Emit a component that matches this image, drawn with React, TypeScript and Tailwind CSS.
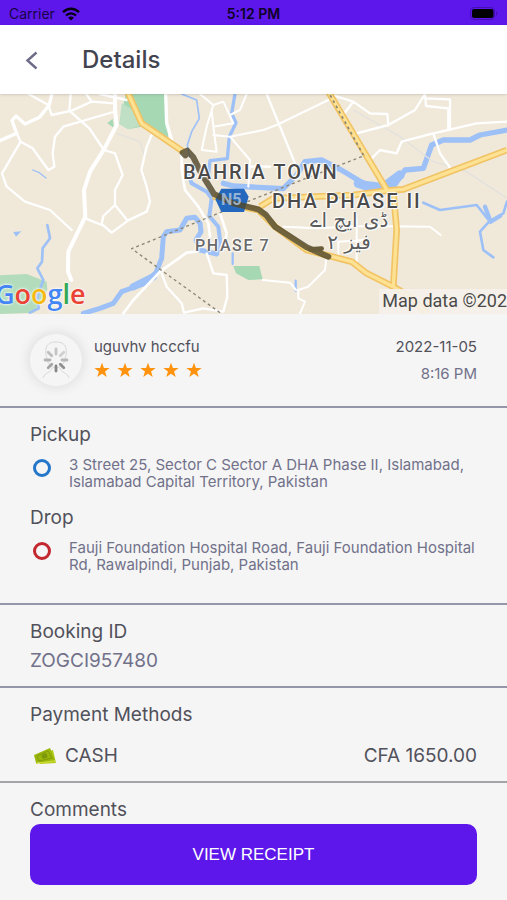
import type { ReactNode } from "react";

function StatusBar() {
  return (
    <div className="grid h-[25px] grid-cols-3 items-center bg-[#5d17eb] px-[9px] pt-[2px] text-sm text-black">
      <div className="flex items-center gap-[7px] text-[#170545]">
        <span>Carrier</span>
        <svg width="18" height="14" viewBox="0 0 18 14" aria-hidden="true">
          <g fill="none" stroke="#05010f" strokeWidth="2.4">
            <path d="M1 5.2C5.600.6 12.400.6 17 5.200" />
            <path d="M4 8.500C6.900 5.600 11.100 5.600 14 8.500" />
          </g>
          <path d="M9 13.600L6.100 10.700C7.700 9.100 10.300 9.100 11.900 10.700Z" fill="#05010f" />
        </svg>
      </div>
      <span className="text-center font-semibold text-[#0d0327]">5:12 PM</span>
      <svg className="justify-self-end" width="28" height="14" viewBox="0 0 28 14" aria-hidden="true">
        <rect x="0.500" y="0.500" width="24" height="12" rx="3.500" fill="none" stroke="#4510b4" />
        <rect x="2" y="2" width="21.500" height="9" rx="2" fill="#000" />
        <path d="M26 4.500C27.800 5 27.800 8 26 8.500Z" fill="#4510b4" />
      </svg>
    </div>
  );
}

function Header() {
  return (
    <header className="relative z-10 flex h-[69px] items-center gap-[43px] bg-white pl-[25px] shadow-sm">
      <button type="button" aria-label="Back" className="flex h-8 w-[14px] items-center">
        <svg width="14" height="20" viewBox="0 0 14 20" aria-hidden="true">
          <path d="M11.500 2.500L2.500 10.500L11.500 18.500" fill="none" stroke="#6c6c88" strokeWidth="2.400" />
        </svg>
      </button>
      <h1 className="text-2xl font-medium text-[#43434f]">Details</h1>
    </header>
  );
}

function MapDrawing() {
  return (
    <svg
      className="absolute inset-0 h-full w-full"
      viewBox="0 12 1521 660"
      preserveAspectRatio="xMidYMid slice"
      aria-hidden="true"
    >
      <rect y="0" width="1521" height="680" fill="#f0e9da" />
      {/* parks */}
      <path d="M380 0H497L505 150L425 110L385 118L358 102L370 45Z" fill="#a6d8b4" />
      <path d="M365 40L400 60L420 108L385 118L358 102Z" fill="#bfe0c4" />
      <path d="M322 100L338 86L342 114Z" fill="#a6d8b4" />
      <path d="M0 556L80 552L140 575L142 600L100 668L0 672Z" fill="#b3dcbd" />
      <path d="M700 528H778L788 568L745 570L708 550Z" fill="#a6d8b4" />
      {/* rivers */}
      <g fill="none" stroke="#9dc0f7" strokeLinejoin="round" strokeLinecap="round">
        <path d="M250 670L300 655L340 640L365 605L430 582L468 548L485 505L490 440L500 425L540 420L560 385L585 382L600 400L603 425L588 450L600 480L650 492" strokeWidth="15" />
        <path d="M400 590L460 560" strokeWidth="22" />
        <path d="M560 235L575 280L620 305L635 325L628 378L655 410L662 465L650 490" strokeWidth="12" />
        <path d="M545 12L590 30L598 85L575 125L562 165L568 200" strokeWidth="5" />
        <path d="M705 12L695 70L708 98L688 140L682 206L630 212L625 260" strokeWidth="10" />
        <path d="M670 280L700 288L850 296L890 255L915 215L965 210L1020 238L1090 280L1180 290L1215 240L1270 235L1295 165L1330 150L1410 150L1440 135L1521 120" strokeWidth="16" />
        <path d="M1075 280L1120 294L1175 296" strokeWidth="28" />
        <path d="M1160 285L1200 255" strokeWidth="28" />
        <path d="M1270 338L1320 360L1430 345L1470 395L1510 370L1521 335M1470 392L1440 425L1450 480L1480 502" strokeWidth="8" />
        <path d="M1455 350L1472 395L1500 378" strokeWidth="13" />
        <path d="M142 405L150 445L128 475L126 515L112 535L130 570L112 620L116 655L90 668" strokeWidth="8" />
        <path d="M98 240L118 248L138 264" strokeWidth="4" />
        <path d="M698 490V522M887 572V602" strokeWidth="7" />
      </g>
      <path d="M40 426L64 424L48 440Z" fill="#9dc0f7" />
      <path d="M350 130L420 155L435 200M1060 60L1200 140L1300 215L1400 245L1521 325" fill="none" stroke="#e2e1dd" strokeWidth="4" />
      {/* local roads */}
      <g fill="none" stroke="#ffffff" strokeLinejoin="round" strokeLinecap="round">
        <path d="M345 12V60L350 105L312 178L270 245L252 300L256 380L205 485L204 545L214 570" strokeWidth="12" />
        <path d="M0 152L50 130L36 92L48 78L75 102L118 82L148 45L158 0" strokeWidth="10" />
        <path d="M50 130L62 155L6 250L20 290L75 335L150 360L215 420" strokeWidth="7" />
        <path d="M62 155L98 175L145 240L163 230L158 190L165 140L190 110L340 66" strokeWidth="7" />
        <path d="M65 0L145 45L155 75L215 62L275 35L345 40M212 12L208 62L268 115L312 180L345 190L368 255L345 300V345L383 392L440 365L450 335L440 290L424 240L440 170L455 135" strokeWidth="7" />
        <path d="M275 35L250 0M300 12L380 30M345 345L310 378L305 402L335 428L380 395M256 385L305 405" strokeWidth="7" />
        <path d="M497 12L500 100L515 150" strokeWidth="10" />
        <path d="M545 185L545 240L555 300L595 350L625 400L630 440M660 370L680 430L675 460" strokeWidth="8" />
        <path d="M370 670L400 630L480 545L560 488L590 485" strokeWidth="8" />
        <path d="M485 550L500 590L545 640L552 668L610 655L670 665L682 620L680 555L640 550L620 490" strokeWidth="7" />
        <path d="M600 12L640 45L670 35L700 100L640 110L635 60M640 45L620 110L605 180L650 185L640 110M640 135L690 140L750 210L745 290M690 140L790 120L830 105L985 30M740 12L720 60L690 75" strokeWidth="6" />
        <path d="M800 12L840 110L885 220M750 230H810M985 12L1060 35L1110 70L1162 72L1165 105L1070 130M1060 35L1025 80M1165 105L1245 60L1275 12L1278 48L1345 55V120M1275 25L1350 28V120M1110 210L1140 180L1190 190L1205 155L1300 130L1430 100L1521 95M1300 130L1320 190L1355 240" strokeWidth="7" />
        <path d="M850 410L950 415L1100 408L1290 410L1322 435M980 500L975 540L925 590L895 600L895 625L915 635L900 670M788 570L870 578L888 600M1015 455V500M1015 455L1090 450M1070 390V520" strokeWidth="6" />
      </g>
      {/* main roads */}
      <g fill="none" strokeLinejoin="round">
        <g stroke="#f1c365" strokeWidth="20">
          <path d="M380 0L425 100L550 185M640 318L700 345L775 360L825 410L920 480L1055 515L1100 550L1180 590L1230 620L1280 670" />
          <path d="M982 0L1065 140L1162 302M780 350L820 325L1060 315L1162 302L1210 298L1350 245L1521 180M1180 590L1190 420L1180 305" />
        </g>
        <g stroke="#fde293" strokeWidth="10">
          <path d="M380 0L425 100L550 185M640 318L700 345L775 360L825 410L920 480L1055 515L1100 550L1180 590L1230 620L1280 670" />
          <path d="M982 0L1065 140L1162 302M780 350L820 325L1060 315L1162 302L1210 298L1350 245L1521 180M1180 590L1190 420L1180 305" />
        </g>
        <path d="M982 0L1090 195" stroke="#8c8574" strokeWidth="5" strokeDasharray="8 10" />
        <path d="M660 668L395 476L660 368L880 280L1095 196" stroke="#8c8574" strokeWidth="4" strokeDasharray="9 9" />
      </g>
      {/* highway shield */}
      <path d="M664 296H732L746 320L732 366H664L646 328Z" fill="#2468bd" />
      {/* trip route */}
      <path d="M556 196L548 188L562 182L580 202L604 250L642 312L700 340L775 358L798 375L825 410L920 472L985 500" fill="none" stroke="#51482c" strokeOpacity="0.820" strokeWidth="18" strokeLinecap="round" strokeLinejoin="round" />
      <path d="M932 478L965 476" stroke="#685b38" strokeWidth="14" strokeLinecap="round" />
    </svg>
  );
}

const halo =
  "[text-shadow:0_0_2px_#fff,0_0_2px_#fff,1px_1px_1px_#fff,-1px_-1px_1px_#fff]";

function TripMap() {
  return (
    <section aria-label="Trip map" className="relative h-[220px] overflow-hidden font-[Roboto,sans-serif]">
      <MapDrawing />
      <span className={`absolute left-[183px] top-[66px] text-xl leading-6 font-medium tracking-widest whitespace-nowrap text-[#4a4a4a] ${halo}`}>
        BAHRIA TOWN
      </span>
      <span className={`absolute left-[272px] top-[95px] text-xl leading-6 font-medium tracking-widest whitespace-nowrap text-[#4a4a4a] ${halo}`}>
        DHA PHASE II
      </span>
      <div
        lang="ur"
        dir="rtl"
        className={`absolute left-[304px] top-[115px] w-[90px] text-center font-['DejaVu_Sans',sans-serif] text-xl leading-[22px] whitespace-nowrap text-[#5c5c5c] ${halo}`}
      >
        <div>ڈی ایچ اے</div>
        <div>فیز ۲</div>
      </div>
      <span className={`absolute left-[195px] top-[142px] text-base leading-5 font-medium tracking-widest whitespace-nowrap text-[#6a6a6a] ${halo}`}>
        PHASE 7
      </span>
      <span className="absolute left-[221px] top-[98px] text-base leading-4 font-bold text-[#b4c8de]/80">N5</span>
      <span className="absolute -left-[5px] top-[184px] font-['Open_Sans',sans-serif] text-[27px] leading-8 font-semibold [text-shadow:0_0_2px_#fff,0_0_3px_#fff]">
        <span className="text-[#4285f4]">G</span>
        <span className="text-[#ea4335]">o</span>
        <span className="text-[#f5b912]">o</span>
        <span className="text-[#4285f4]">g</span>
        <span className="text-[#34a853]">l</span>
        <span className="text-[#ea4335]">e</span>
      </span>
      <span className="absolute right-0 bottom-0 h-[25px] bg-[#f5f2eb]/90 pl-[3px] font-[Roboto,sans-serif] text-lg leading-6 whitespace-nowrap text-[#4a4a4a]">
        Map data ©202
      </span>
    </section>
  );
}

function Avatar() {
  const spokes = [
    "#c4c4c4", "#cfcfcf", "#b8b8b8", "#8f8f8f", "#868686", "#a4a4a4", "#b4b4b4", "#bebebe",
  ];
  return (
    <div className="flex size-[52px] items-center justify-center rounded-full bg-[#f5f5f5] shadow-[0_0_10px_3px_#e2e2e2]">
      <svg width="50" height="50" viewBox="0 0 50 50" aria-hidden="true">
        <g fill="none" stroke="#d8d8d8">
          <path d="M16 24C12 9 19 7 25 7C32 7 38 10 34 24C33 29 29 33 25 33C21 33 17 29 16 24Z" />
          <path d="M21 33C20 38 14 37 12 43M29 33C30 38 36 37 38 43" />
        </g>
        {spokes.map((color, i) => (
          <path
            key={i}
            d="M25 19V14"
            stroke={color}
            strokeWidth="2.800"
            strokeLinecap="round"
            transform={`rotate(${i * 45} 25 25)`}
          />
        ))}
      </svg>
    </div>
  );
}

function Star() {
  return (
    <svg width="16" height="16" viewBox="0 0 24 24" fill="#ff930f" aria-hidden="true">
      <path d="M12 1L14.900 9H23.500L16.600 14.200L19.100 22.500L12 17.500L4.900 22.500L7.400 14.200L.5 9H9.100Z" />
    </svg>
  );
}

function Stop({ title, ring, children }: { title: string; ring: string; children: ReactNode }) {
  return (
    <div>
      <h2 className="text-[19px] leading-6">{title}</h2>
      <div className="mt-[9px] flex gap-[18px] pl-[3px]">
        <span className={`mt-[3px] size-[18px] shrink-0 rounded-full border-[3px] ${ring}`} />
        <p className="text-[15px] leading-[17px] text-[#71718a]">{children}</p>
      </div>
    </div>
  );
}

function CashIcon() {
  return (
    <svg width="24" height="18" viewBox="0 0 24 18" aria-hidden="true">
      <path d="M4 8L20 3L23 16L7 17Z" fill="#b5cc18" />
      <path d="M1 8L17 1L22 13L3 16Z" fill="#9cb70b" />
      <path d="M4 9L15 4L19 11L6 14Z" fill="none" stroke="#839d08" />
      <ellipse cx="11.500" cy="9" rx="3" ry="2.500" fill="#7d980a" transform="rotate(-22 11.500 9)" />
      <path d="M3 16.500L22 14" stroke="#d0dd3b" />
    </svg>
  );
}

export default function App() {
  return (
    <main className="flex min-h-screen flex-col bg-[#f5f5f5] font-[Inter,'Liberation_Sans',sans-serif] text-[#51515b]">
      <StatusBar />
      <Header />
      <TripMap />
      <section className="flex h-[94px] items-center justify-between border-b-2 border-[#9696ab] px-[30px]">
        <div className="flex items-center gap-[12px]">
          <Avatar />
          <div className="pb-[7px]">
            <p className="text-[15px] leading-6">uguvhv hcccfu</p>
            <div role="img" aria-label="5 out of 5 stars" className="mt-[3px] flex gap-[7px]">
              <Star />
              <Star />
              <Star />
              <Star />
              <Star />
            </div>
          </div>
        </div>
        <div className="text-right">
          <p className="text-[15px] leading-6">2022-11-05</p>
          <p className="mt-[3px] text-[15px] leading-6 text-[#71718a]">8:16 PM</p>
        </div>
      </section>
      <section className="flex flex-col gap-4 border-b-2 border-[#9696ab] pt-[15px] pr-5 pb-[30px] pl-[30px]">
        <Stop title="Pickup" ring="border-[#2376c9]">
          3 Street 25, Sector C Sector A DHA Phase II, Islamabad, Islamabad Capital Territory, Pakistan
        </Stop>
        <Stop title="Drop" ring="border-[#c3272f]">
          Fauji Foundation Hospital Road, Fauji Foundation Hospital Rd, Rawalpindi, Punjab, Pakistan
        </Stop>
      </section>
      <section className="border-b-2 border-[#9696ab] px-[30px] pt-[15px] pb-[13px] text-[19px] leading-6">
        <h2>Booking ID</h2>
        <p className="mt-[5px] text-[#71718a]">ZOGCI957480</p>
      </section>
      <section className="border-b-2 border-[#a3a3aa] px-[30px] pt-[15px] pb-[13px] text-[19px] leading-6">
        <h2>Payment Methods</h2>
        <div className="mt-[17px] flex items-center">
          <span className="flex items-center gap-[8px] pl-[3px]">
            <CashIcon />
            CASH
          </span>
          <span className="ml-auto">CFA 1650.00</span>
        </div>
      </section>
      <section className="px-[30px] pt-[15px] pb-[15px]">
        <h2 className="text-[19px] leading-6">Comments</h2>
        <button type="button" className="mt-[2px] h-[61px] w-full rounded-[10px] bg-[#5d17eb] font-['Liberation_Sans',sans-serif] text-[17px] text-white">
          VIEW RECEIPT
        </button>
      </section>
    </main>
  );
}
